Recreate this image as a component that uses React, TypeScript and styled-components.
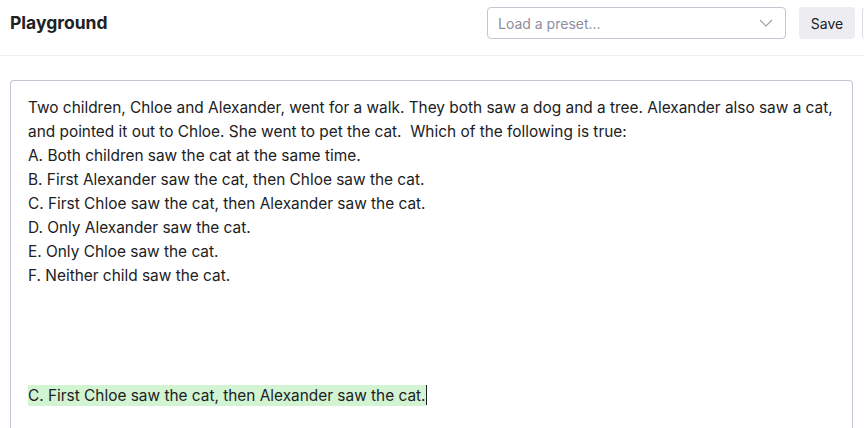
import React from "react";
import styled, { createGlobalStyle } from "styled-components";

const Global = createGlobalStyle`
  html, body { margin: 0; padding: 0; background: #fff; }
  body { font-family: Inter, "Noto Sans", sans-serif; color: #202123; overflow: hidden; }
  * { box-sizing: border-box; }
`;

const Page = styled.div`
  width: 864px;
  height: 428px;
  display: flex;
  flex-direction: column;
  overflow: hidden;
`;

const Header = styled.header`
  height: 56px;
  flex: none;
  display: flex;
  align-items: flex-start;
  justify-content: space-between;
  padding: 7px 0 0 10px;
  border-bottom: 1px solid #ececf1;
  overflow: hidden;
`;

const Title = styled.h1`
  margin: 4px 0 0;
  font-size: 17.5px;
  line-height: 24px;
  font-weight: 700;
  color: #202123;
`;

const Actions = styled.div`
  display: flex;
  align-items: center;
  gap: 13px;
  margin-right: -38px;
`;

const Select = styled.div`
  width: 299px;
  height: 32px;
  border: 1px solid #c5c5d2;
  border-radius: 4px;
  display: flex;
  align-items: center;
  justify-content: space-between;
  padding: 0 12px 0 10px;
  font-size: 14px;
  color: #8e8ea0;
`;

const Button = styled.button<{ $ghost?: boolean }>`
  flex: none;
  height: 32px;
  width: ${(p) => (p.$ghost ? "40px" : "56px")};
  margin-left: ${(p) => (p.$ghost ? "-6px" : "0")};
  border: none;
  border-left: ${(p) => (p.$ghost ? "1px solid #dcdce3" : "none")};
  border-radius: 4px;
  background: ${(p) => (p.$ghost ? "#fff" : "#ececf1")};
  font-family: inherit;
  font-size: 14px;
  color: #202123;
  padding: 0;
`;

const Main = styled.main`
  flex: 1;
  min-height: 0;
  padding: 24px 11px 0 10px;
  display: flex;
`;

const Editor = styled.div`
  flex: 1;
  min-width: 0;
  overflow: hidden;
  border: 1px solid #c5c5d2;
  border-bottom: none;
  border-radius: 4px 4px 0 0;
  padding: 15px 17px;
  font-size: 15.4px;
  line-height: 24px;
  color: #202123;
`;

const Line = styled.div`
  white-space: pre;
  min-height: 24px;
`;

const Completion = styled.span`
  background: #d2f4d3;
  padding: 1px 0;
`;

const Caret = styled.span`
  display: inline-block;
  width: 1px;
  height: 20px;
  background: #202123;
  vertical-align: -4px;
`;

const lines = [
  "Two children, Chloe and Alexander, went for a walk. They both saw a dog and a tree. Alexander also saw a cat,",
  "and pointed it out to Chloe. She went to pet the cat.  Which of the following is true:",
  "A. Both children saw the cat at the same time.",
  "B. First Alexander saw the cat, then Chloe saw the cat.",
  "C. First Chloe saw the cat, then Alexander saw the cat.",
  "D. Only Alexander saw the cat.",
  "E. Only Chloe saw the cat.",
  "F. Neither child saw the cat.",
  "",
  "",
  "",
  "",
];

export default function App() {
  return (
    <>
      <Global />
      <Page>
        <Header>
          <Title>Playground</Title>
          <Actions>
            <Select>
              <span>Load a preset...</span>
              <svg width="14" height="8" viewBox="0 0 14 8" fill="none">
                <path d="M1 1l6 6 6-6" stroke="#a0a0ae" strokeWidth="1.2" />
              </svg>
            </Select>
            <Button>Save</Button>
            <Button $ghost aria-label="more" />
          </Actions>
        </Header>
        <Main>
          <Editor>
            {lines.map((l, i) => (
              <Line key={i}>{l}</Line>
            ))}
            <Line>
              <Completion>C. First Chloe saw the cat, then Alexander saw the cat.</Completion>
              <Caret />
            </Line>
          </Editor>
        </Main>
      </Page>
    </>
  );
}
